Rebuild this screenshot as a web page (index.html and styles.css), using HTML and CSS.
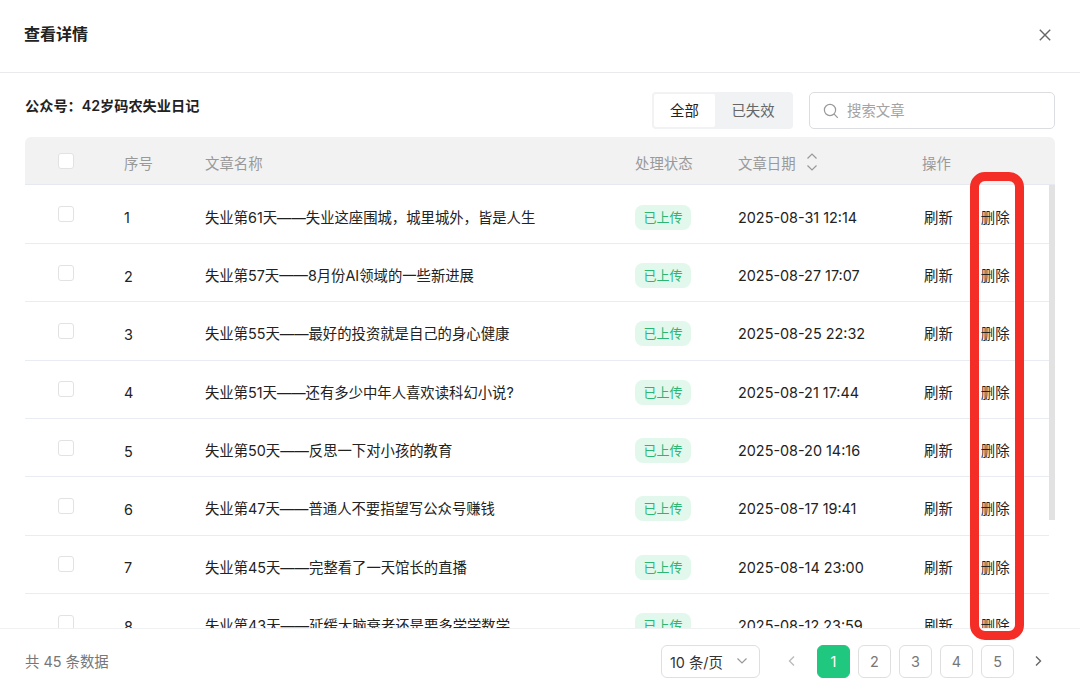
FILE: index.html
```html
<!DOCTYPE html>
<html lang="zh-CN">
<head>
<meta charset="utf-8">
<title>查看详情</title>
<link rel="stylesheet" href="styles.css">
</head>
<body>
<div class="dialog">
  <header class="dialog-head">
    <h1 class="dialog-title">查看详情</h1>
    <svg class="close" width="12" height="12" viewBox="0 0 12 12"><path d="M.8.8l10.4 10.4M11.2.8L.8 11.2" stroke="#666" stroke-width="1.4" fill="none"/></svg>
  </header>
  <section class="toolbar">
    <div class="account">公众号：42岁码农失业日记</div>
    <div class="tools">
      <div class="segment"><span class="seg active">全部</span><span class="seg">已失效</span></div>
      <div class="search">
        <svg width="16" height="16" viewBox="0 0 16 16"><circle cx="7" cy="7" r="5.6" stroke="#999" stroke-width="1.2" fill="none"/><path d="M11.2 11.2l3.6 3.6" stroke="#999" stroke-width="1.2" fill="none"/></svg>
        <span class="search-text">搜索文章</span>
      </div>
    </div>
  </section>
  <section class="table">
    <div class="row thead">
      <span class="cell-check"><i class="check"></i></span>
      <span>序号</span>
      <span>文章名称</span>
      <span>处理状态</span>
      <span class="date-head">文章日期
        <svg width="12" height="20" viewBox="0 0 12 20"><path d="M1.500 6.500L6 2l4.500 4.500M1.500 13.500L6 18l4.500-4.500" stroke="#999" stroke-width="1.200" fill="none"/></svg>
      </span>
      <span class="ops-head">操作</span>
    </div>
    <div class="tbody">
      <div class="rows">
        <div class="row"><span class="cell-check"><i class="check"></i></span><span class="seq">1</span><span class="name">失业第61天——失业这座围城，城里城外，皆是人生</span><span><b class="tag">已上传</b></span><span>2025-08-31 12:14</span><span class="ops"><a>刷新</a><a>删除</a></span></div>
        <div class="row"><span class="cell-check"><i class="check"></i></span><span class="seq">2</span><span class="name">失业第57天——8月份AI领域的一些新进展</span><span><b class="tag">已上传</b></span><span>2025-08-27 17:07</span><span class="ops"><a>刷新</a><a>删除</a></span></div>
        <div class="row"><span class="cell-check"><i class="check"></i></span><span class="seq">3</span><span class="name">失业第55天——最好的投资就是自己的身心健康</span><span><b class="tag">已上传</b></span><span>2025-08-25 22:32</span><span class="ops"><a>刷新</a><a>删除</a></span></div>
        <div class="row"><span class="cell-check"><i class="check"></i></span><span class="seq">4</span><span class="name">失业第51天——还有多少中年人喜欢读科幻小说?</span><span><b class="tag">已上传</b></span><span>2025-08-21 17:44</span><span class="ops"><a>刷新</a><a>删除</a></span></div>
        <div class="row"><span class="cell-check"><i class="check"></i></span><span class="seq">5</span><span class="name">失业第50天——反思一下对小孩的教育</span><span><b class="tag">已上传</b></span><span>2025-08-20 14:16</span><span class="ops"><a>刷新</a><a>删除</a></span></div>
        <div class="row"><span class="cell-check"><i class="check"></i></span><span class="seq">6</span><span class="name">失业第47天——普通人不要指望写公众号赚钱</span><span><b class="tag">已上传</b></span><span>2025-08-17 19:41</span><span class="ops"><a>刷新</a><a>删除</a></span></div>
        <div class="row"><span class="cell-check"><i class="check"></i></span><span class="seq">7</span><span class="name">失业第45天——完整看了一天馆长的直播</span><span><b class="tag">已上传</b></span><span>2025-08-14 23:00</span><span class="ops"><a>刷新</a><a>删除</a></span></div>
        <div class="row"><span class="cell-check"><i class="check"></i></span><span class="seq">8</span><span class="name">失业第43天——延缓大脑衰老还是要多学学数学</span><span><b class="tag">已上传</b></span><span>2025-08-12 23:59</span><span class="ops"><a>刷新</a><a>删除</a></span></div>
      </div>
      <div class="scroll"><div class="thumb"></div></div>
    </div>
  </section>
  <footer class="foot">
    <span class="total">共 45 条数据</span>
    <div class="pager">
      <div class="size">10 条/页
        <svg width="12" height="8" viewBox="0 0 12 8"><path d="M1.500 1.500L6 6l4.500-4.500" stroke="#999" stroke-width="1.200" fill="none"/></svg>
      </div>
      <svg class="prev" width="8" height="12" viewBox="0 0 8 12"><path d="M6 1.500L1.500 6 6 10.500" stroke="#bbb" stroke-width="1.400" fill="none"/></svg>
      <span class="page on">1</span><span class="page">2</span><span class="page">3</span><span class="page">4</span><span class="page">5</span>
      <svg class="next" width="8" height="12" viewBox="0 0 8 12"><path d="M2 1.500L6.500 6 2 10.500" stroke="#666" stroke-width="1.400" fill="none"/></svg>
    </div>
  </footer>
  <div class="highlight"></div>
</div>
</body>
</html>
```
FILE: styles.css
```css
* { box-sizing: border-box; }
html, body { margin: 0; height: 100%; }
body { background: #fff; font-family: Inter, "Noto Sans CJK SC", sans-serif; font-size: 14.400px; color: #222; overflow: hidden; }
.dialog { position: relative; width: 1080px; height: 693px; display: flex; flex-direction: column; }
.dialog-head { height: 73px; flex: none; display: flex; align-items: center; justify-content: space-between; padding: 0 29px 6px 24px; border-bottom: 1px solid #e9eaee; }
.dialog-title { margin: 0; font-size: 16px; font-weight: 600; color: #222; }
.close { margin-top: 4px; }
.toolbar { height: 64px; flex: none; display: flex; justify-content: space-between; padding: 19px 25px 0; }
.account { font-weight: 600; font-size: 14.200px; line-height: 28px; color: #222; }
.tools { display: flex; gap: 16px; }
.segment { width: 141px; height: 37px; padding: 2px; display: flex; background: #f1f2f4; border-radius: 4px; }
.seg { flex: 1; display: flex; align-items: center; justify-content: center; padding-bottom: 3px; color: #666; }
.seg.active { flex: none; width: 61px; background: #fff; color: #222; border-radius: 2px; }
.search { width: 246px; height: 37px; display: flex; align-items: center; gap: 8px; padding-left: 13px; border: 1px solid #dcdde0; border-radius: 5px; color: #a3a3a3; }
.search-text { padding-bottom: 3px; }
.table { flex: none; margin: 0 25px; }
.row { display: grid; grid-template-columns: 99px 81px 430px 103px 186px 1fr; align-items: center; height: 58.330px; border-bottom: 1px solid #e9edf3; padding-top: 6px; }
.thead { height: 48px; padding-top: 4px; background: #f2f2f3; border-radius: 6px 6px 0 0; color: #999; border-bottom-color: #e6e9f0; }
.cell-check { padding-left: 33px; display: flex; }
.check { width: 16px; height: 16px; margin-top: -6px; background: #fff; border: 1px solid #e2e2e2; border-radius: 3px; }
.thead .check { margin-top: -4px; }
.date-head { display: flex; align-items: center; gap: 10px; }
.date-head svg { margin-top: -1px; }
.ops-head { margin-left: -2px; }
.seq { padding-top: 1px; }
.name { padding-bottom: 2px; font-size: 14.350px; }
.tag { display: inline-block; width: 56px; height: 25px; line-height: 24px; text-align: center; font-weight: 400; font-size: 13px; color: #2bb673; background: #e3f8ec; border-radius: 8px; }
.ops { display: flex; gap: 28px; padding-bottom: 2px; }
.ops a { color: #222; }
.tbody { position: relative; height: 443px; overflow: hidden; }
.rows { margin: 0.600px 6px 0 0; }
.scroll { position: absolute; top: 0; right: 0; width: 6px; height: 335px; }
.thumb { height: 100%; background: #e2e2e2; }
.foot { flex: 1; position: relative; display: flex; align-items: center; justify-content: space-between; padding: 0 25px 0; background: #fff; border-top: 1px solid #f0f1f3; }
.total { color: #777; padding-bottom: 2px; }
.pager { display: flex; align-items: center; gap: 8px; margin-right: 13px; }
.size { width: 99px; height: 33px; margin-right: 20px; display: flex; align-items: center; gap: 13px; padding-left: 8px; border: 1px solid #dfdfdf; border-radius: 6px; color: #333; }
.prev { margin-right: 13px; }
.next { margin-left: 12px; }
.page { width: 33px; height: 33px; display: flex; align-items: center; justify-content: center; border: 1px solid #dfdfdf; border-radius: 6px; color: #777; }
.page.on { background: #20c77f; border-color: #20c77f; color: #fff; }
.highlight { position: absolute; left: 970px; top: 172px; width: 54px; height: 468px; border: 9px solid #f42d26; border-radius: 15px; pointer-events: none; }
```
